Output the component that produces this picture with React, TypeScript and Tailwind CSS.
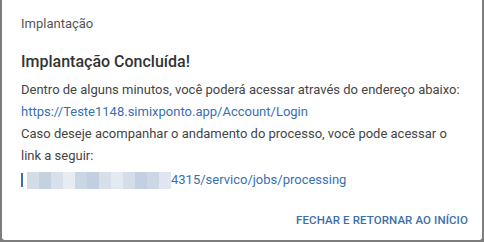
import React from "react";

const blur = [
  "#d3dde8", "#c3d1e1", "#d8e1eb", "#e6ecf3", "#c9d6e4", "#c1cfe0", "#d6dfea",
  "#e4eaf2", "#d4dde8", "#c2d0e1", "#cbd7e4", "#dfe6ef",
];

export default function App() {
  return (
    <div
      className="w-[484px] h-[242px] bg-[#7d7d7d] flex justify-center overflow-hidden"
      style={{ fontFamily: "Roboto, 'Liberation Sans', sans-serif" }}
    >
      <div className="w-[480px] h-[240px] bg-white rounded-b-[3px] flex flex-col">
        <div className="px-[19px] pt-[14px] h-[44px] text-[13px] leading-[20px] text-[#555]">
          Implantação
        </div>
        <div className="px-[19px] pt-[6px] flex flex-col">
          <h2 className="text-[16px] leading-[24px] font-medium text-[#333]">
            Implantação Concluída!
          </h2>
          <div className="mt-[5px] text-[13px] leading-[22px] text-[#444]">
            <p>Dentro de alguns minutos, você poderá acessar através do endereço abaixo:</p>
            <p className="text-[#3a70b0]">https://Teste1148.simixponto.app/Account/Login</p>
            <p>
              Caso deseje acompanhar o andamento do processo, você pode acessar o link a seguir:
            </p>
            <p className="mt-[2px] flex items-center text-[#3a70b0]">
              <span className="w-[2px] h-[14px] bg-[#3a70b0] mr-[4px]" />
              <span className="flex h-[17px]">
                {blur.map((c, i) => (
                  <span key={i} className="w-[12px] h-full" style={{ background: c }} />
                ))}
              </span>
              <span>4315/servico/jobs/processing</span>
            </p>
          </div>
        </div>
        <div className="mt-auto flex justify-end px-[14px] pb-[12px]">
          <button className="text-[11.5px] leading-[16px] font-medium tracking-[0.1px] text-[#3f6ea8] uppercase">
            Fechar e retornar ao início
          </button>
        </div>
      </div>
    </div>
  );
}
